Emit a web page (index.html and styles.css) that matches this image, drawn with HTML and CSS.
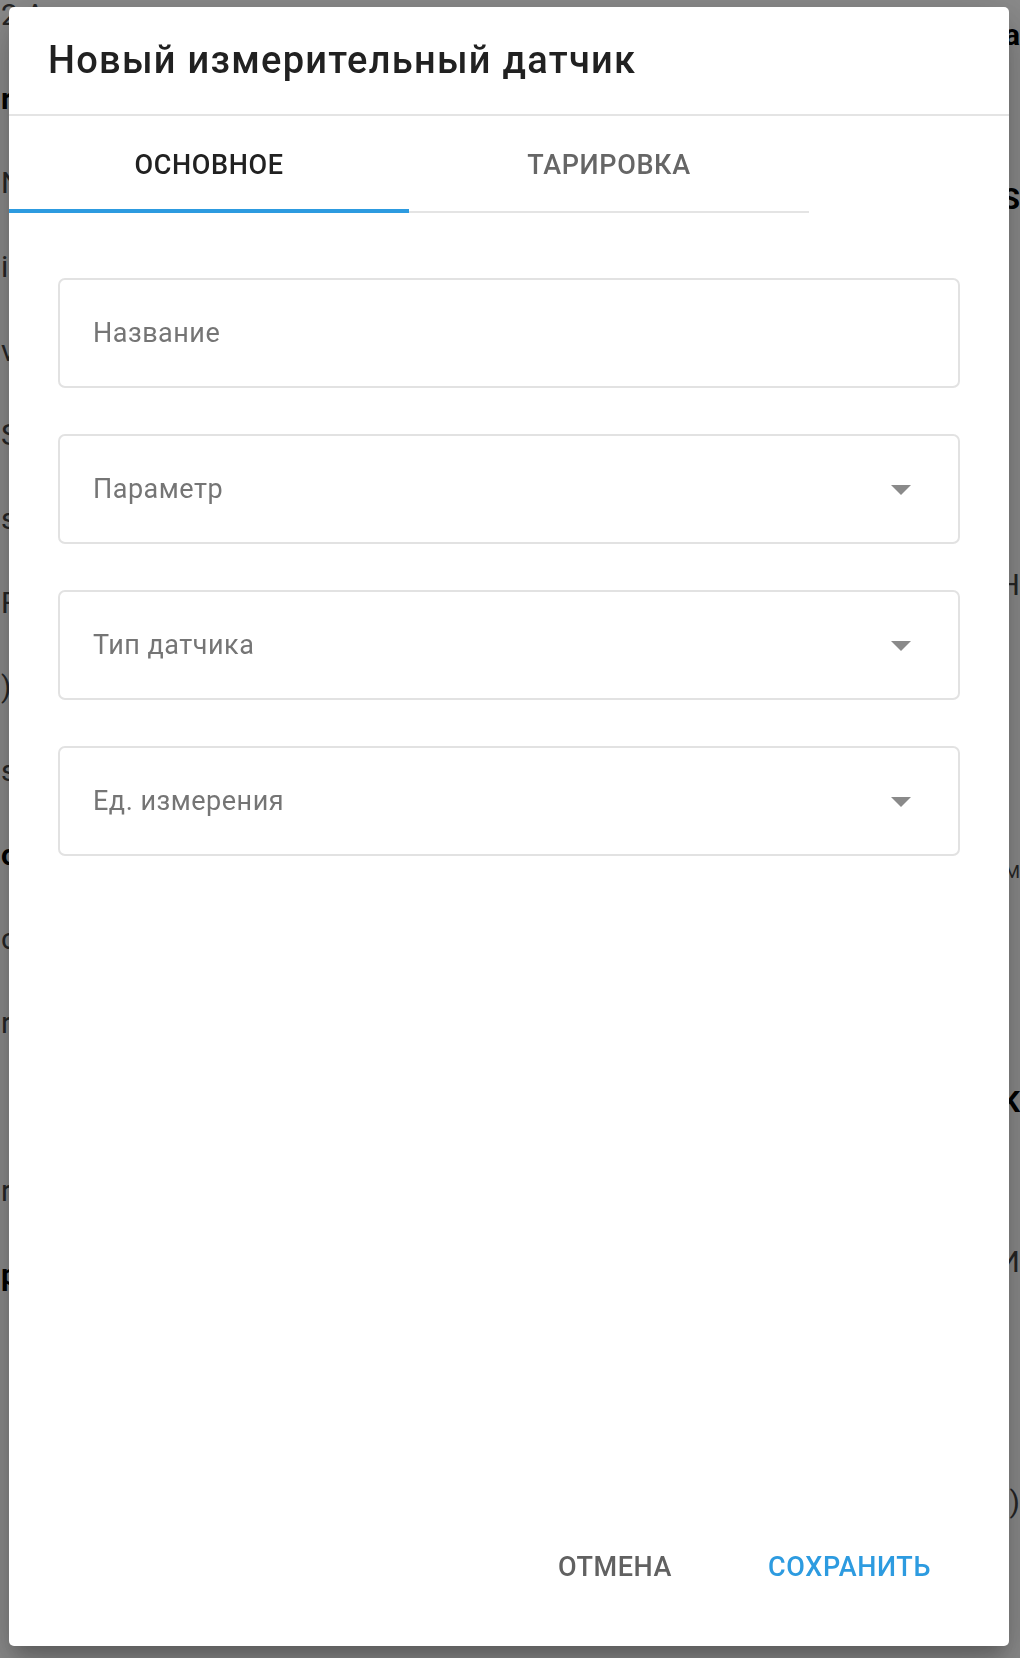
FILE: index.html
```html
<!DOCTYPE html>
<html lang="ru">
<head>
<meta charset="utf-8">
<title>Новый измерительный датчик</title>
<link rel="stylesheet" href="styles.css">
</head>
<body>
<div class="page">
  <div class="strip strip-left">
    <div class="bg-row">2 A</div>
    <div class="bg-row bold">r</div>
    <div class="bg-row">N</div>
    <div class="bg-row">i</div>
    <div class="bg-row">v</div>
    <div class="bg-row">S</div>
    <div class="bg-row">s</div>
    <div class="bg-row">F</div>
    <div class="bg-row">)</div>
    <div class="bg-row">s</div>
    <div class="bg-row bold">o</div>
    <div class="bg-row">c</div>
    <div class="bg-row">r</div>
    <div class="bg-row"></div>
    <div class="bg-row">r</div>
    <div class="bg-row bold">p</div>
  </div>
  <div class="strip strip-right">
    <div class="bg-row r1 bold">a</div>
    <div class="bg-row r2 bold">S</div>
    <div class="bg-row r3">H</div>
    <div class="bg-row r4 small">M</div>
    <div class="bg-row r5 bold">K</div>
    <div class="bg-row r6">И</div>
    <div class="bg-row r7">)</div>
  </div>
</div>
<div class="overlay"></div>
<div class="dialog">
  <div class="dialog-header">
    <h1 class="dialog-title">Новый измерительный датчик</h1>
  </div>
  <div class="tabs">
    <div class="tab tab-active">ОСНОВНОЕ</div>
    <div class="tab">ТАРИРОВКА</div>
  </div>
  <div class="form">
    <div class="field"><span class="field-label">Название</span></div>
    <div class="field"><span class="field-label">Параметр</span>
      <svg class="arrow" viewBox="0 0 24 24" width="48" height="48"><path d="M7 10l5 5 5-5z"/></svg></div>
    <div class="field"><span class="field-label">Тип датчика</span>
      <svg class="arrow" viewBox="0 0 24 24" width="48" height="48"><path d="M7 10l5 5 5-5z"/></svg></div>
    <div class="field"><span class="field-label">Ед. измерения</span>
      <svg class="arrow" viewBox="0 0 24 24" width="48" height="48"><path d="M7 10l5 5 5-5z"/></svg></div>
  </div>
  <div class="actions">
    <button class="btn btn-cancel">ОТМЕНА</button>
    <button class="btn btn-save">СОХРАНИТЬ</button>
  </div>
</div>
</body>
</html>
```
FILE: styles.css
```css
* { box-sizing: border-box; }
html, body { margin: 0; padding: 0; }
body {
  width: 1020px;
  height: 1658px;
  overflow: hidden;
  background: #fff;
  font-family: Roboto, "Noto Sans", sans-serif;
}
.page {
  display: flex;
  justify-content: space-between;
  width: 1020px;
  height: 1658px;
}
.strip {
  display: flex;
  flex-direction: column;
  width: 16px;
  color: #444;
  font-size: 30px;
}
.strip-left .bg-row {
  height: 84px;
  line-height: 30px;
  margin-left: 1px;
  white-space: nowrap;
}
.strip-right { align-items: flex-end; }
.strip-right .bg-row { white-space: nowrap; line-height: 30px; }
.bold { font-weight: 700; color: #000; }
.small { font-size: 18px; }
.r1 { margin-top: 20px; }
.r2 { margin-top: 134px; }
.r3 { margin-top: 356px; }
.r4 { margin-top: 257px; }
.r5 { margin-top: 200px; }
.r6 { margin-top: 130px; }
.r7 { margin-top: 210px; }
.overlay {
  position: fixed;
  inset: 0;
  background: rgba(0, 0, 0, 0.46);
}
.dialog {
  position: fixed;
  left: 9px;
  top: 7px;
  width: 1000px;
  height: 1639px;
  background: #fff;
  border-radius: 5px;
  display: flex;
  flex-direction: column;
  box-shadow: 0 11px 15px -7px rgba(0,0,0,.2), 0 24px 38px 3px rgba(0,0,0,.14), 0 9px 46px 8px rgba(0,0,0,.12);
}
.dialog-header {
  height: 109px;
  border-bottom: 2px solid #e4e4e4;
  padding: 31px 0 0 39px;
}
.dialog-title {
  margin: 0;
  font-size: 38px;
  line-height: 44px;
  font-weight: 500;
  letter-spacing: 1.28px;
  color: #212121;
}
.tabs {
  display: flex;
  width: 800px;
  height: 97px;
}
.tab {
  flex: 1;
  height: 97px;
  padding-top: 33px;
  text-align: center;
  font-size: 27px;
  line-height: 32px;
  font-weight: 500;
  letter-spacing: 0.65px;
  color: #666;
  border-bottom: 2px solid #e4e4e4;
}
.tab-active {
  color: #212121;
  border-bottom: 4px solid #2d9be0;
}
.form {
  display: flex;
  flex-direction: column;
  gap: 46px;
  padding: 65px 49px 0 49px;
}
.field {
  height: 110px;
  border: 2px solid #e2e2e2;
  border-radius: 7px;
  display: flex;
  align-items: center;
  justify-content: space-between;
  padding: 0 33px 0 33px;
}
.field-label {
  font-size: 27px;
  line-height: 32px;
  letter-spacing: 0.5px;
  color: #757575;
}
.arrow { fill: #8a8a8a; display: block; }
.actions {
  margin-top: auto;
  display: flex;
  justify-content: flex-end;
  gap: 96px;
  padding: 0 78px 63px 0;
}
.btn {
  border: 0;
  background: none;
  padding: 0;
  font-family: Roboto, "Noto Sans", sans-serif;
  font-size: 27px;
  line-height: 32px;
  font-weight: 500;
  letter-spacing: 0.6px;
}
.btn-cancel { color: #616161; }
.btn-save { color: #2d9be0; }
```
